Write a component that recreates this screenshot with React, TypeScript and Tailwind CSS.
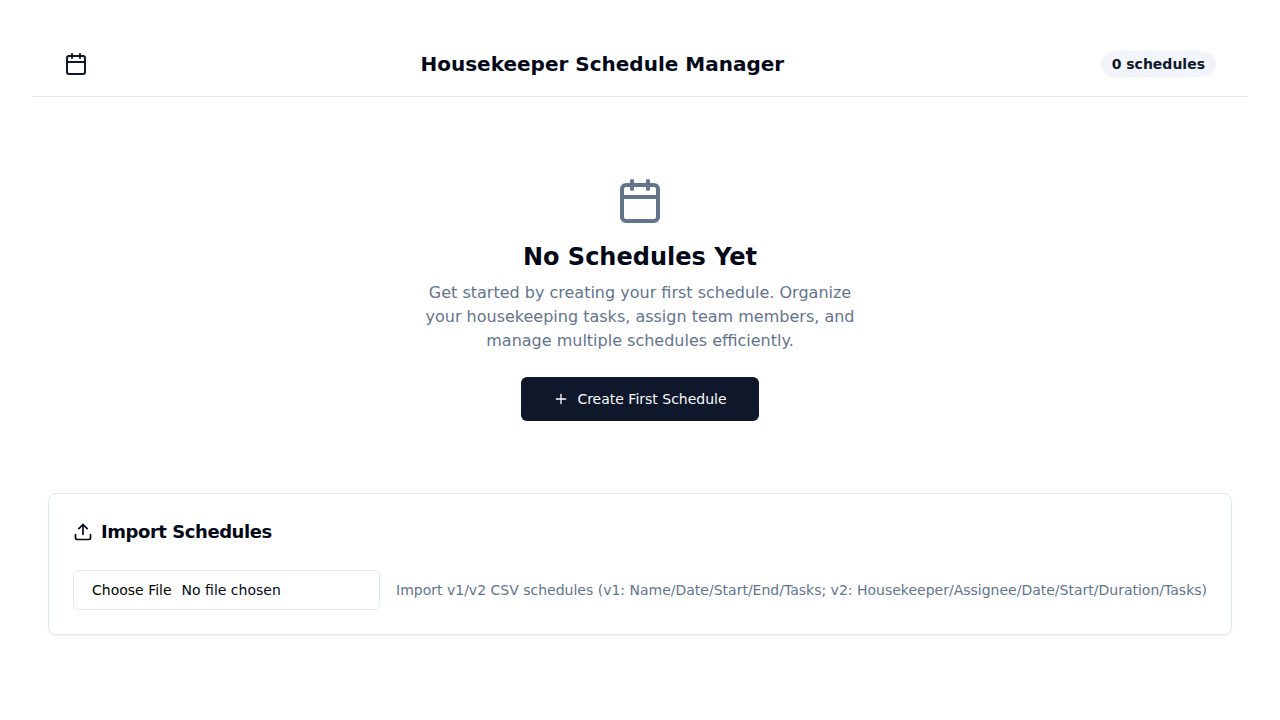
import { Calendar, Plus, Upload } from "lucide-react";

function Header({ count }: { count: number }) {
  return (
    <header className="flex h-[65px] items-center justify-between border-b border-[#e2e8f0] px-8">
      <Calendar className="mr-4 size-6 text-[#0f172a]" />
      <h1 className="text-xl leading-7 font-bold">Housekeeper Schedule Manager</h1>
      <div className="rounded-full border border-transparent bg-[#f1f5f9] px-2.5 py-0.5 text-sm font-semibold text-[#0f172a]">
        {count} schedules
      </div>
    </header>
  );
}

function EmptyState() {
  return (
    <section className="flex flex-col items-center px-4 pt-20 text-center">
      <Calendar className="mb-4 size-12 text-[#64748b]" />
      <h2 className="mb-2 text-2xl font-bold">No Schedules Yet</h2>
      <p className="mb-6 max-w-md text-base text-[#64748b]">
        Get started by creating your first schedule. Organize your housekeeping tasks, assign team members, and manage
        multiple schedules efficiently.
      </p>
      <button className="inline-flex h-11 items-center justify-center rounded-md bg-[#0f172a] px-8 text-sm font-medium text-[#f8fafc]">
        <Plus className="mr-2 size-4" />
        Create First Schedule
      </button>
    </section>
  );
}

function ImportCard() {
  return (
    <section className="mx-4 mt-[72px] rounded-lg border border-[#e2e8f0] bg-white p-6 shadow-xs">
      <h3 className="flex items-center gap-2 text-lg leading-7 font-semibold tracking-tight">
        <Upload className="size-5" />
        Import Schedules
      </h3>
      <div className="mt-6 flex items-center gap-4">
        <input
          type="file"
          accept=".csv"
          className="h-10 min-w-0 flex-1 rounded-md border border-[#e2e8f0] bg-white px-3 py-2 text-sm file:border-0 file:bg-transparent file:px-1.5 file:py-px file:text-sm file:font-medium file:text-black"
        />
        <p className="shrink-0 text-sm text-[#64748b]">
          Import v1/v2 CSV schedules (v1: Name/Date/Start/End/Tasks; v2: Housekeeper/Assignee/Date/Start/Duration/Tasks)
        </p>
      </div>
    </section>
  );
}

export default function App() {
  return (
    <div className="min-h-screen bg-white p-8 font-['DejaVu_Sans',sans-serif] text-[#020817]">
      <Header count={0} />
      <EmptyState />
      <ImportCard />
    </div>
  );
}
